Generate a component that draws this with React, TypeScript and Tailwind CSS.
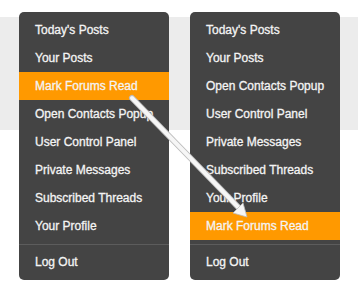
const items = [
	"Today's Posts",
	'Your Posts',
	'Mark Forums Read',
	'Open Contacts Popup',
	'User Control Panel',
	'Private Messages',
	'Subscribed Threads',
	'Your Profile'
];

interface MenuProps {
	order: string[];
	active: string;
}

function Menu({ order, active }: MenuProps) {
	return (
		<div className="w-[150px] h-[268px] bg-[#444444] rounded-[5px] py-1 flex flex-col">
			{order.map((label) => (
				<div
					key={label}
					className={`h-[28px] flex items-center pl-4 text-[12px] text-[#f4f4f4] [-webkit-text-stroke:0.3px_#f4f4f4] whitespace-nowrap overflow-hidden ${
						label === active ? 'bg-[#ff9900]' : ''
					}`}
				>
					{label}
				</div>
			))}
			<div className="h-[8px] flex items-center">
				<div className="h-px w-full bg-[#5c5c5c]" />
			</div>
			<div className="h-[28px] flex items-center pl-4 text-[12px] text-[#f4f4f4] [-webkit-text-stroke:0.3px_#f4f4f4]">
				Log Out
			</div>
		</div>
	);
}

function Arrow() {
	return (
		<svg
			className="absolute left-0 top-0 pointer-events-none"
			width="358"
			height="299"
			viewBox="0 0 358 299"
		>
			<line
				x1="132"
				y1="98"
				x2="240"
				y2="209"
				stroke="#bdbdbd"
				strokeWidth="6"
				strokeLinecap="round"
			/>
			<line
				x1="132"
				y1="98"
				x2="240"
				y2="209"
				stroke="#f6f6f6"
				strokeWidth="4"
				strokeLinecap="round"
			/>
			<polygon points="247,217 233,213 243,203" fill="#f6f6f6" stroke="#bdbdbd" strokeWidth="0.8" />
		</svg>
	);
}

export default function App() {
	const reordered = items.filter((i) => i !== 'Mark Forums Read').concat('Mark Forums Read');

	return (
		<div
			className="relative w-[358px] h-[299px] bg-[linear-gradient(to_bottom,#ffffff_17px,#ececec_17px,#ececec_130px,#ffffff_130px)] font-['Liberation_Sans',Arial,sans-serif]"
		>
			<div className="flex gap-[21px] pl-[19px] pt-[12px]">
				<Menu order={items} active="Mark Forums Read" />
				<Menu order={reordered} active="Mark Forums Read" />
			</div>
			<Arrow />
		</div>
	);
}
